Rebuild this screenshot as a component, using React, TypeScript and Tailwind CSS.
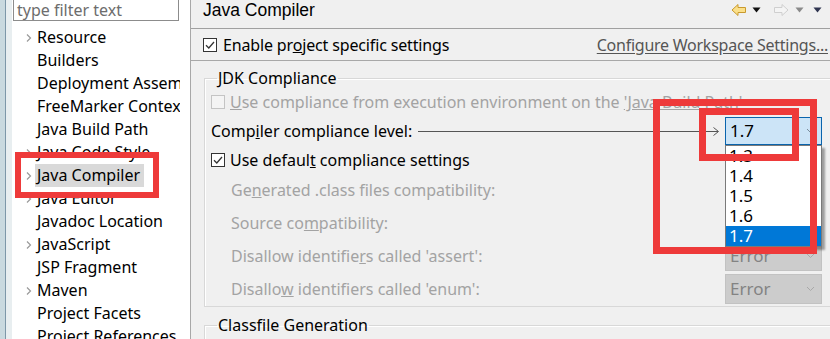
import React from 'react';

const UI = { fontFamily: '"Noto Sans", "Liberation Sans", sans-serif' };
const TITLE = { fontFamily: '"Liberation Sans", Arial, sans-serif' };

const treeItems: { label: string; arrow?: boolean; selected?: boolean }[] = [
  { label: 'Resource', arrow: true },
  { label: 'Builders' },
  { label: 'Deployment Assembly' },
  { label: 'FreeMarker Context' },
  { label: 'Java Build Path' },
  { label: 'Java Code Style', arrow: true },
  { label: 'Java Compiler', arrow: true, selected: true },
  { label: 'Java Editor', arrow: true },
  { label: 'Javadoc Location' },
  { label: 'JavaScript', arrow: true },
  { label: 'JSP Fragment' },
  { label: 'Maven', arrow: true },
  { label: 'Project Facets' },
  { label: 'Project References' },
];

const Chevron = ({ color = '#9a9a9a' }: { color?: string }) => (
  <svg width="8" height="10" viewBox="0 0 8 10">
    <path d="M2 1.5 L5.5 5 L2 8.5" fill="none" stroke={color} strokeWidth="1.2" />
  </svg>
);

const Check = ({ checked, disabled }: { checked?: boolean; disabled?: boolean }) => (
  <span
    className={`flex h-[14px] w-[14px] shrink-0 items-center justify-center border ${
      disabled ? 'border-[#c4c4c4] bg-[#f4f4f4]' : 'border-[#333333] bg-white'
    }`}
  >
    {checked && (
      <svg width="12" height="12" viewBox="0 0 12 12">
        <path d="M2 6.2 L4.8 9 L10 3" fill="none" stroke="#333" strokeWidth="1.3" />
      </svg>
    )}
  </span>
);

const Combo = ({ value, focused }: { value: string; focused?: boolean }) => (
  <div
    className={`flex w-[97px] shrink-0 items-center justify-between border pl-[4px] pr-[6px] text-[17px] ${
      focused
        ? 'h-[28px] border-[#0a64ad] bg-[#cce4f7] text-black'
        : 'h-[30px] border-[#c2c2c2] bg-[#cccccc] text-[#838383]'
    }`}
  >
    <span>{value}</span>
    <svg width="9" height="6" viewBox="0 0 9 6">
      <path d="M1 1 L4.5 4.5 L8 1" fill="none" stroke={focused ? '#7a8a99' : '#a8a8a8'} strokeWidth="1" />
    </svg>
  </div>
);

const Tri = ({ color }: { color: string }) => (
  <svg width="9" height="6" viewBox="0 0 9 6" className="shrink-0">
    <path d="M0.5 0.5 L8.5 0.5 L4.5 5.5 Z" fill={color} />
  </svg>
);

const NavIcons = () => (
  <div className="flex shrink-0 items-center pr-[8px] pt-[3px]">
    <svg width="16" height="14" viewBox="0 0 16 14" className="shrink-0">
      <path d="M1 7 L7 1.5 L7 4.5 L14.5 4.5 L14.5 9.5 L7 9.5 L7 12.5 Z" fill="#fbe08a" stroke="#c99a2e" strokeWidth="1" />
    </svg>
    <span className="ml-[5px]">
      <Tri color="#111" />
    </span>
    <svg width="16" height="14" viewBox="0 0 16 14" className="ml-[12px] shrink-0">
      <path d="M15 7 L9 1.5 L9 4.5 L1.5 4.5 L1.5 9.5 L9 9.5 L9 12.5 Z" fill="#f4f4f4" stroke="#cfcfcf" strokeWidth="1" />
    </svg>
    <span className="ml-[6px]">
      <Tri color="#8a8a8a" />
    </span>
    <span className="ml-[9px]">
      <Tri color="#2f3550" />
    </span>
  </div>
);

export default function App() {
  return (
    <div className="relative flex h-[339px] w-[830px] overflow-hidden bg-[#f0f0f0] text-[16px] leading-[20px]" style={UI}>
      {/* sliver of the window behind */}
      <div className="flex w-[12px] shrink-0 bg-[#dfe8ec]">
        <div className="w-[5px] bg-[#c9d9df]" />
        <div className="w-[1px] bg-[#7d97a8]" />
        <div className="flex-1 bg-[#e8eef0]" />
      </div>

      {/* left tree panel */}
      <div className="flex w-[179px] shrink-0 flex-col overflow-hidden border-r border-[#a8a8a8] bg-white">
        <div className="ml-[1px] mt-[-1px] flex h-[22px] w-[166px] shrink-0 items-center border border-[#8c8c8c] pl-[3px] text-[#6d6d6d]">
          type filter text
        </div>
        <div className="mt-[5px] flex w-[168px] flex-col overflow-hidden">
          {treeItems.map((it) => (
            <div key={it.label} className="flex h-[23px] shrink-0 items-center whitespace-nowrap">
              <span className="flex w-[21px] shrink-0 justify-end">{it.arrow && <Chevron />}</span>
              <span
                className={`ml-[2px] shrink-0 pl-[2px] pr-[4px] leading-[23px] ${
                  it.selected ? 'bg-[#d9d9d9]' : ''
                }`}
              >
                {it.label}
              </span>
            </div>
          ))}
        </div>
      </div>

      {/* right settings panel */}
      <div className="flex min-w-0 flex-1 flex-col pl-[12px]">
        <div className="-ml-[12px] flex h-[29px] shrink-0 items-start justify-between border-b border-[#a0a0a0] pl-[12px]">
          <span className="text-[17.5px] leading-[20px] text-black" style={TITLE}>
            Java Compiler
          </span>
          <NavIcons />
        </div>

        <div className="-ml-[12px] flex h-[32px] shrink-0 items-center justify-between border-b border-[#a8a8a8] pl-[12px] pr-[2px]">
          <label className="flex items-center gap-[6px] whitespace-nowrap tracking-[-0.15px]">
            <Check checked />
            <span>
              Enable pr<u>o</u>ject specific settings
            </span>
          </label>
          <span className="whitespace-nowrap tracking-[-0.25px] text-[#555] underline underline-offset-2">
            Configure Workspace Settings...
          </span>
        </div>

        <fieldset className="ml-[1px] mt-[7px] w-[650px] shrink-0 border border-[#d8d8d8] pb-[1px] pl-[6px] shadow-[inset_1px_1px_0_#fff]">
          <legend className="ml-[6px] px-[1px] leading-[20px]">JDK Compliance</legend>
          <div className="flex w-[611px] flex-col">
            <div className="flex h-[28px] items-center gap-[5px] whitespace-nowrap text-[#a3a3a3]">
              <Check disabled />
              <span>
                <u>U</u>se compliance from execution environment on the <u>'Java Build Path'</u>
              </span>
            </div>
            <div className="flex h-[30px] items-center whitespace-nowrap">
              <span>
                Comp<u>i</u>ler compliance level:
              </span>
              <div className="ml-[6px] mr-[6px] flex flex-1 items-center">
                <div className="h-[1px] flex-1 bg-[#555]" />
                <svg width="6" height="9" viewBox="0 0 6 9" className="-ml-[5px]">
                  <path d="M0.5 0.5 L5.5 4.5 L0.5 8.5" fill="none" stroke="#555" strokeWidth="1" />
                </svg>
              </div>
              <Combo value="1.7" focused />
            </div>
            <div className="flex h-[27px] items-center gap-[5px] whitespace-nowrap">
              <Check checked />
              <span>
                Use defaul<u>t</u> compliance settings
              </span>
            </div>
            {[
              [<>Ge<u>n</u>erated .class files compatibility:</>, '1.7'],
              [<>Source co<u>m</u>patibility:</>, '1.7'],
              [<>Disallow identifie<u>r</u>s called 'assert':</>, 'Error'],
              [<>Disallo<u>w</u> identifiers called 'enum':</>, 'Error'],
            ].map(([label, val], i) => (
              <div key={i} className="flex h-[33px] items-center justify-between whitespace-nowrap pl-[20px] text-[#a3a3a3]">
                <span>{label}</span>
                <Combo value={val as string} />
              </div>
            ))}
          </div>
        </fieldset>

        <fieldset className="ml-[1px] mt-[8px] h-[60px] w-[650px] shrink-0 border border-[#d8d8d8] pl-[6px] shadow-[inset_1px_1px_0_#fff]">
          <legend className="ml-[6px] px-[1px] leading-[20px]">Classfile Generation</legend>
        </fieldset>
      </div>

      {/* open dropdown list */}
      <div className="absolute left-[725px] top-[145px] flex w-[97px] flex-col border border-[#7a7a7a] bg-white text-[17px] shadow-[3px_3px_2px_rgba(0,0,0,0.35)]">
        {['1.3', '1.4', '1.5', '1.6', '1.7'].map((v) => (
          <div
            key={v}
            className={`h-[20px] pl-[3px] leading-[20px] ${v === '1.7' ? 'bg-[#0078d7] text-white' : 'text-black'}`}
          >
            {v}
          </div>
        ))}
      </div>

      {/* red annotation boxes */}
      <div className="absolute left-[15px] top-[152px] h-[46px] w-[144px] border-[6px] border-[#ee3a3a]" />
      <div className="absolute left-[653px] top-[99px] h-[155px] w-[164px] border-[7px] border-[#ee3a3a]" />
      <div className="absolute left-[699px] top-[108px] h-[53px] w-[100px] border-[7px] border-[#ee3a3a]" />
    </div>
  );
}
